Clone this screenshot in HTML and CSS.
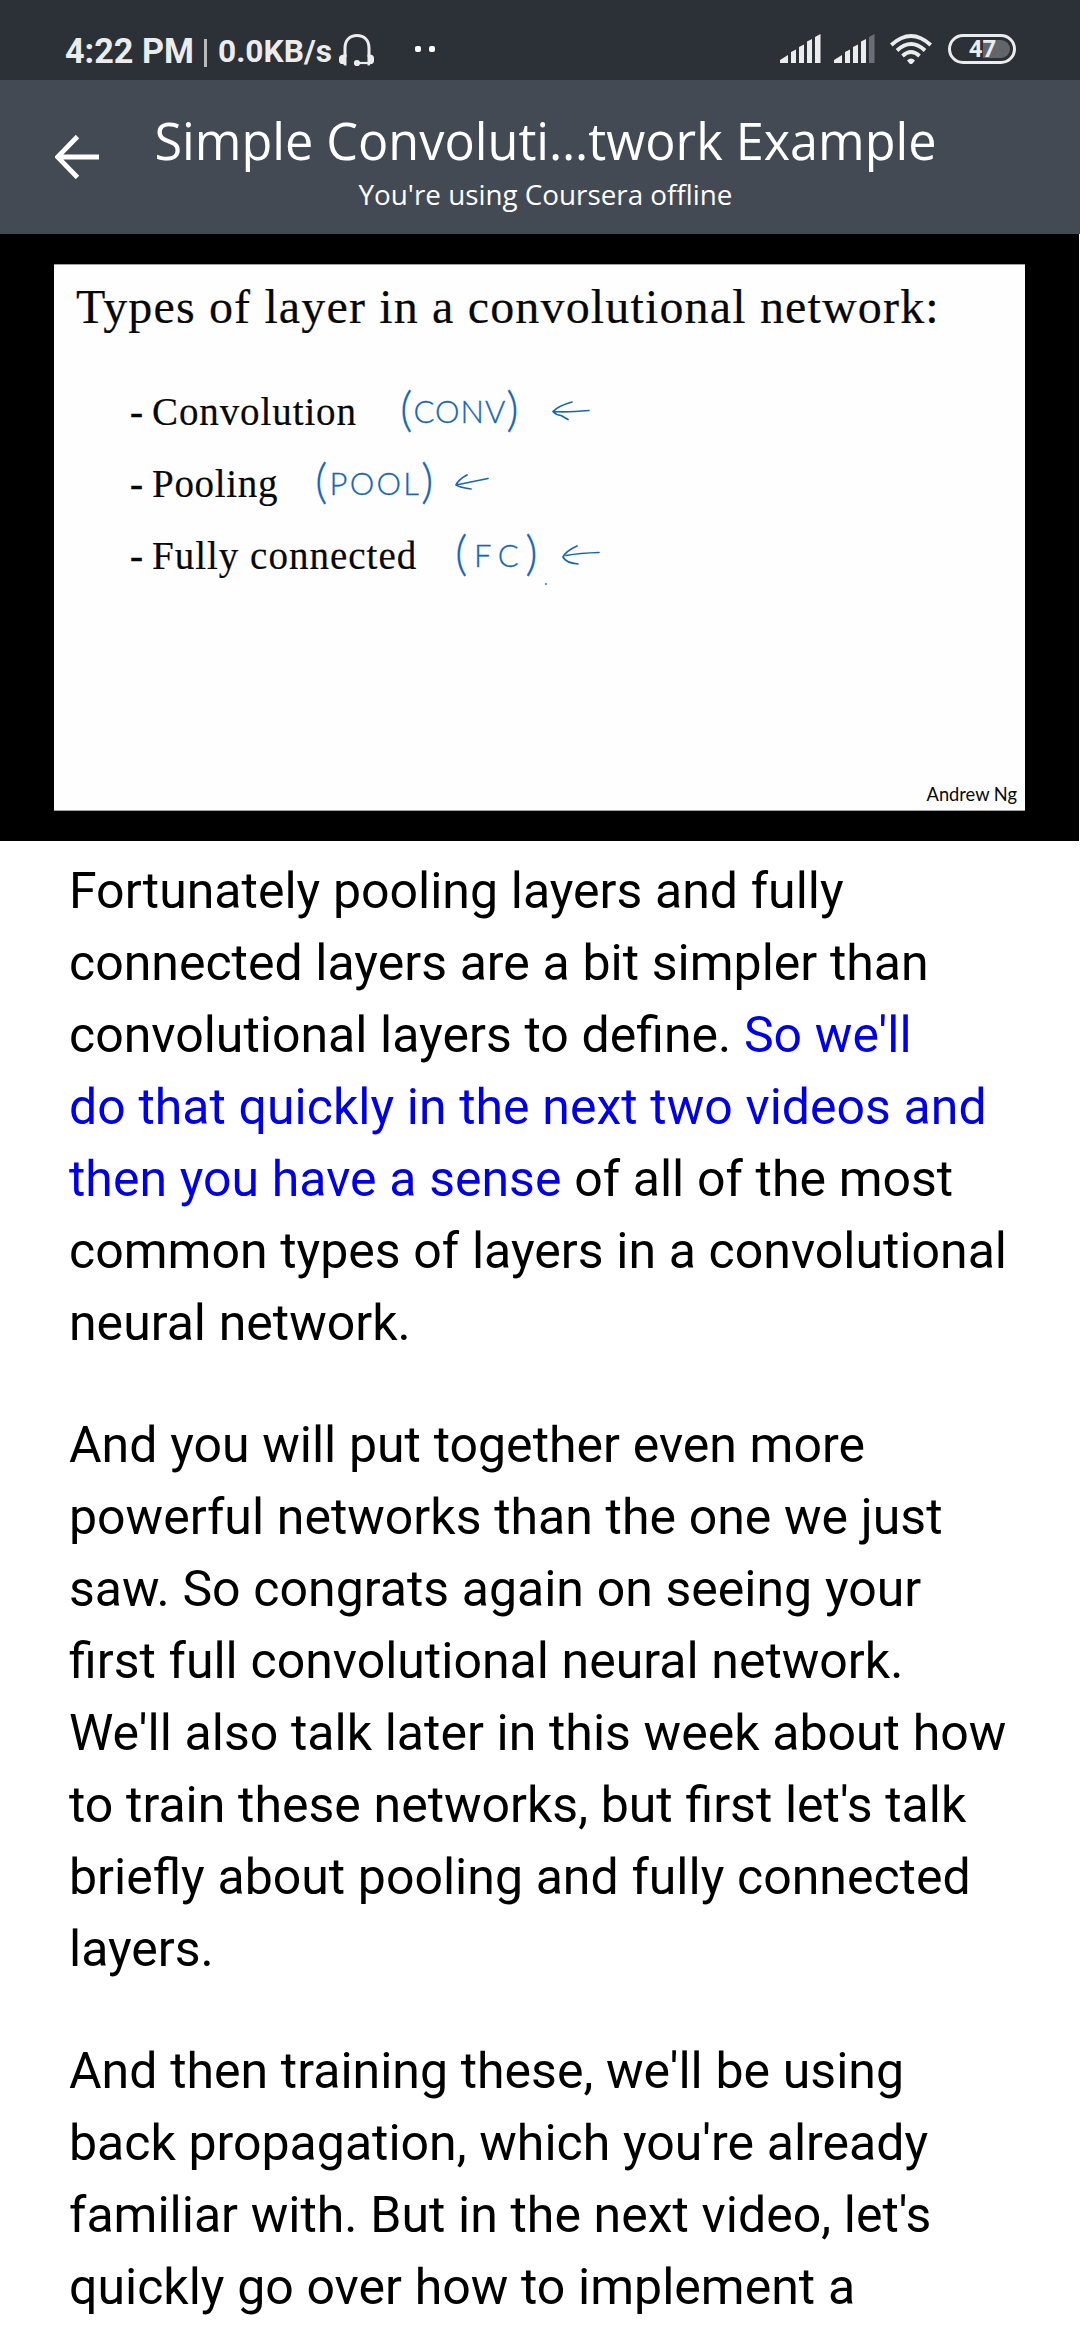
FILE: index.html
```html
<!DOCTYPE html>
<html lang="en">
<head>
<meta charset="utf-8">
<title>Simple Convolutional Network Example</title>
<link rel="stylesheet" href="styles.css">
</head>
<body>
<div class="status">
  <span class="clock">4:22 PM</span>
  <span class="divider"></span>
  <span class="speed">0.0KB/s</span>
  <svg class="headset" viewBox="0 0 36 34"><path d="M6 23V14C6 6 11 1.500 18 1.500s12 4.500 12 12.500v9" fill="none" stroke="currentColor" stroke-width="3"/><path d="M7.500 31.500H5.500L4 30H2Q0 29 0 27V24Q0 21 4.500 20.500H7.500zM28.500 31.500H30.500L31.500 30H33Q35 29 35 27V24Q35 21 31.500 20.500H28.500z" fill="currentColor"/><path d="M18 29H31" stroke="currentColor" stroke-width="2.200"/><circle cx="18" cy="29" r="3.100" fill="currentColor"/></svg>
  <span class="dot"></span><span class="dot"></span>
  <svg class="signal" viewBox="0 0 41 29"><path d="M0 29V26L8 21V29zM11 29V18L16 15.500V29zM19 29V13L24 10.500V29zM27 29V7.500L32 5V29zM35 29V3L40.500 0V29z" fill="currentColor"/></svg>
  <svg class="signal second" viewBox="0 0 41 29"><path d="M0 29V26L8 21V29zM11 29V18L16 15.500V29zM19 29V13L24 10.500V29zM27 29V7.500L32 5V29z" fill="currentColor"/><path d="M35 29V3L40.500 0V29z" fill="#6b6f75"/></svg>
  <svg class="wifi" viewBox="0 0 42 30"><g fill="none" stroke="currentColor" stroke-width="3.800"><path d="M1.300 11Q21-7 40.700 11"/><path d="M7 16.500Q21 3.500 35 16.500"/><path d="M12.500 22Q21 14 29.500 22"/></g><path d="M17 26.500Q21 22.500 25 26.500L22.500 29.500Q21 30.500 19.500 29.500z" fill="currentColor"/></svg>
  <div class="battery"><span class="charge"></span><span class="percent">47</span></div>
</div>
<header class="bar">
  <svg class="back" viewBox="0 0 44 44"><path d="M44 22H3M22.500 1.500L2.500 22L22.500 42.500" fill="none" stroke="#fff" stroke-width="4.800"/></svg>
  <div class="titles">
    <h1>Simple Convoluti…twork Example</h1>
    <p>You're using Coursera offline</p>
  </div>
</header>
<section class="video">
  <div class="slide">
    <h2>Types of layer in a convolutional network:</h2>
    <ul>
      <li><span class="dash">-</span><span class="conv">Convolution</span><span class="ink ink-conv"><i>(</i>CONV<i>)</i></span><svg class="arrow arrow-conv" viewBox="0 0 38 20"><path d="M20 1Q6 5 1 10.500Q14 11.500 37 9.500M1 10.500Q4 14 9 14.500L16 18.500"/></svg></li>
      <li><span class="dash">-</span><span class="pool">Pooling</span><span class="ink ink-pool"><i>(</i>POOL<i>)</i></span><svg class="arrow arrow-pool" viewBox="0 0 34 20"><path d="M12 2Q4 6 1 12L33 5.500M1 12Q3 14 16 16"/></svg></li>
      <li><span class="dash">-</span><span class="full">Fully connected</span><span class="ink ink-fc"><i>(</i>FC<i>)</i></span><svg class="arrow arrow-fc" viewBox="0 0 38 20"><path d="M15 1Q4 6 1 12Q4 18 16 19M4 10.500Q18 8 37 7.500"/></svg></li>
    </ul>
    <span class="speck"></span>
    <footer>Andrew Ng</footer>
  </div>
</section>
<main class="transcript">
  <p>Fortunately pooling layers and fully<br>connected layers are a bit simpler than<br>convolutional layers to define. <span class="current">So we'll<br>do that quickly in the next two videos and<br>then you have a sense</span> of all of the most<br>common types of layers in a convolutional<br>neural network.</p>
  <p>And you will put together even more<br>powerful networks than the one we just<br>saw. So congrats again on seeing your<br>first full convolutional neural network.<br>We'll also talk later in this week about how<br>to train these networks, but first let's talk<br>briefly about pooling and fully connected<br>layers.</p>
  <p>And then training these, we'll be using<br>back propagation, which you're already<br>familiar with. But in the next video, let's<br>quickly go over how to implement a</p>
</main>
</body>
</html>
```
FILE: styles.css
```css
* { box-sizing: border-box; margin: 0; padding: 0; }
body { width: 1080px; height: 2340px; overflow: hidden; background: #fff; display: flex; flex-direction: column; font-family: Roboto, sans-serif; }
svg { display: block; flex: none; }

.status { height: 80px; flex: none; background: #2c3037; color: #ebecec; display: flex; align-items: flex-start; padding: 34px 64px 0 65px; }
.clock, .speed { font-weight: 700; white-space: nowrap; line-height: 34px; }
.clock { width: 139px; font-size: 34.200px; }
.divider { width: 3px; height: 28px; margin-top: 5px; background: #b8babc; }
.speed { width: 120px; margin-left: 11px; margin-right: 1px; font-size: 31.700px; line-height: 35px; }
.headset { width: 36px; height: 34px; }
.dot { width: 6px; height: 6px; margin: 12px 0 0 8px; border-radius: 2px; background: #fff; }
.headset + .dot { margin-left: 40px; }
.signal { width: 41px; height: 29px; margin-left: auto; }
.second { margin-left: 13px; }
.wifi { width: 42px; height: 30px; margin-left: 15px; }
.battery { width: 68px; height: 30px; margin-left: 16px; border: 3px solid #ebecec; border-radius: 15px; display: grid; }
.charge, .percent { grid-area: 1 / 1; }
.charge { width: 27px; height: 18px; margin: 3px 0 0 32px; border-radius: 0 9px 9px 0; background: #62666b; }
.percent { font: 700 24px/25px Roboto, sans-serif; text-align: center; padding-left: 1px; }

.bar { height: 154px; flex: none; background: #444a53; color: #fff; display: flex; padding-left: 55px; font-family: "Open Sans", "Noto Sans", sans-serif; }
.back { width: 44px; height: 44px; margin-top: 55px; }
.titles { width: 893px; display: flex; flex-direction: column; align-items: center; padding-top: 26px; white-space: nowrap; }
.titles h1 { font-size: 50.400px; font-weight: 400; line-height: 70px; }
.titles p { font-size: 27.800px; line-height: 36px; }

.video { height: 607px; flex: none; background: #000; border-right: 1px solid #fff; padding: 30px 54px 0 54px; }
.slide { position: relative; height: 547px; background: #fefefe; border-top: 1px solid #a0a0a0; border-bottom: 1px solid #a0a0a0; color: #080808; display: flex; flex-direction: column; font-family: "Liberation Serif", serif; }
.slide h2 { font-size: 48px; font-weight: 400; line-height: 60px; padding: 12px 0 0 22px; letter-spacing: 1.160px; white-space: nowrap; -webkit-text-stroke: .200px #080808; }
.slide ul { list-style: none; padding: 38px 0 0 76px; }
.slide li { height: 72px; display: flex; align-items: center; font-size: 39px; white-space: nowrap; }
.dash { width: 22px; -webkit-text-stroke: .500px #080808; }
.conv, .pool, .full { -webkit-text-stroke: .200px #080808; }
.conv { width: 248px; letter-spacing: .900px; }
.pool { width: 163px; letter-spacing: .700px; }
.full { width: 303px; letter-spacing: 1px; }
.ink { font-family: Lato, sans-serif; font-weight: 300; font-size: 31px; line-height: 48px; color: #1766b3; display: flex; align-items: center; -webkit-text-stroke: .300px #1766b3; }
.ink i { font-style: normal; font-size: 48px; line-height: 44px; margin-top: -6px; }
.ink-conv { width: 152px; letter-spacing: 1px; }
.ink-pool { width: 140px; letter-spacing: 2.200px; }
.ink-fc { width: 107px; letter-spacing: 6.500px; }
.arrow { fill: none; stroke: #1766b3; stroke-width: 1.700; stroke-linecap: round; stroke-linejoin: round; height: 20px; }
.arrow-conv, .arrow-fc { width: 38px; }
.arrow-pool { width: 34px; }
.speck { position: absolute; left: 491px; top: 318px; width: 2px; height: 2px; background: #5b9ad0; }
.slide footer { margin-top: auto; padding: 0 8px 5px 0; text-align: right; font: 18.300px/22px Lato, sans-serif; }

.transcript { padding: 14px 0 0 69px; color: #000; font-size: 50px; line-height: 72px; word-spacing: .300px; white-space: nowrap; }
.transcript p + p { margin-top: 50px; }
.current { color: #0000e6; }
```
